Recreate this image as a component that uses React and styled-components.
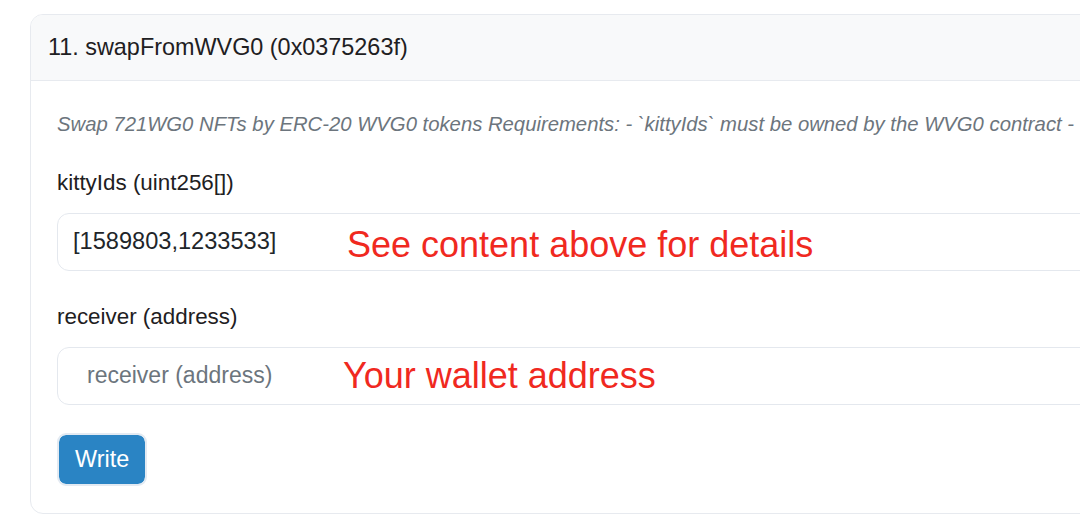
import React from 'react';
import styled, { createGlobalStyle } from 'styled-components';

const GlobalStyle = createGlobalStyle`
  html, body {
    margin: 0;
    padding: 0;
    background: #ffffff;
    overflow: hidden;
  }
  body {
    font-family: "Liberation Sans", Arial, Helvetica, sans-serif;
    color: #212529;
  }
`;

const Page = styled.div`
  padding: 14px 0 0 30px;
`;

const Card = styled.div`
  margin-right: -60px;
  border: 1.5px solid #e7eaef;
  border-radius: 13px;
  overflow: hidden;
  background: #ffffff;
`;

const CardHeader = styled.div`
  display: flex;
  align-items: center;
  height: 65px;
  padding: 0 17px;
  background: #f8f9fa;
  border-bottom: 1.5px solid #e7eaef;
  font-size: 23.4px;
  color: #1e2022;
`;

const CardBody = styled.div`
  padding: 30px 26px 27px;
`;

const Description = styled.p`
  margin: 0 0 33.5px;
  font-size: 20.3px;
  line-height: 26px;
  font-style: italic;
  color: #6c757d;
  white-space: nowrap;
`;

const Field = styled.div`
  margin-bottom: 34px;

  &:last-of-type {
    margin-bottom: 28px;
  }
`;

const Label = styled.label`
  display: block;
  margin-bottom: 18.5px;
  font-size: 22.4px;
  line-height: 24px;
  color: #1e2022;
`;

const InputWrap = styled.div`
  position: relative;
`;

const Input = styled.input`
  box-sizing: border-box;
  width: 100%;
  height: 57.5px;
  padding: 0 ${p => (p.$indent ? '29px' : '15px')};
  border: 1.5px solid #e4e8ee;
  border-radius: 12px;
  font-family: inherit;
  font-size: ${p => (p.$indent ? '23px' : '23.6px')};
  color: #212529;
  background: #ffffff;
  outline: none;

  &::placeholder {
    color: #6c757d;
  }
`;

const Note = styled.span`
  position: absolute;
  top: 50%;
  left: ${p => p.$left}px;
  transform: translateY(calc(-50% + ${p => p.$dy || 0}px));
  font-size: 36px;
  line-height: 40px;
  color: #f0291f;
  pointer-events: none;
  white-space: nowrap;
`;

const Button = styled.button`
  display: block;
  height: 53px;
  padding: 0 16px;
  border: 2px solid #e3eaf2;
  border-radius: 9px;
  background: #2a84c4;
  background-clip: padding-box;
  color: #ffffff;
  font-family: inherit;
  font-size: 23.4px;
  cursor: pointer;
`;

export default function App() {
  return (
    <Page>
      <GlobalStyle />
      <Card>
        <CardHeader>11. swapFromWVG0 (0x0375263f)</CardHeader>
        <CardBody>
          <Description>
            Swap 721WG0 NFTs by ERC-20 WVG0 tokens Requirements: - `kittyIds` must be owned by the WVG0 contract -
          </Description>
          <Field>
            <Label>kittyIds (uint256[])</Label>
            <InputWrap>
              <Input defaultValue="[1589803,1233533]" />
              <Note $left={290} $dy={3}>See content above for details</Note>
            </InputWrap>
          </Field>
          <Field>
            <Label>receiver (address)</Label>
            <InputWrap>
              <Input $indent placeholder="receiver (address)" />
              <Note $left={286}>Your wallet address</Note>
            </InputWrap>
          </Field>
          <Button>Write</Button>
        </CardBody>
      </Card>
    </Page>
  );
}
